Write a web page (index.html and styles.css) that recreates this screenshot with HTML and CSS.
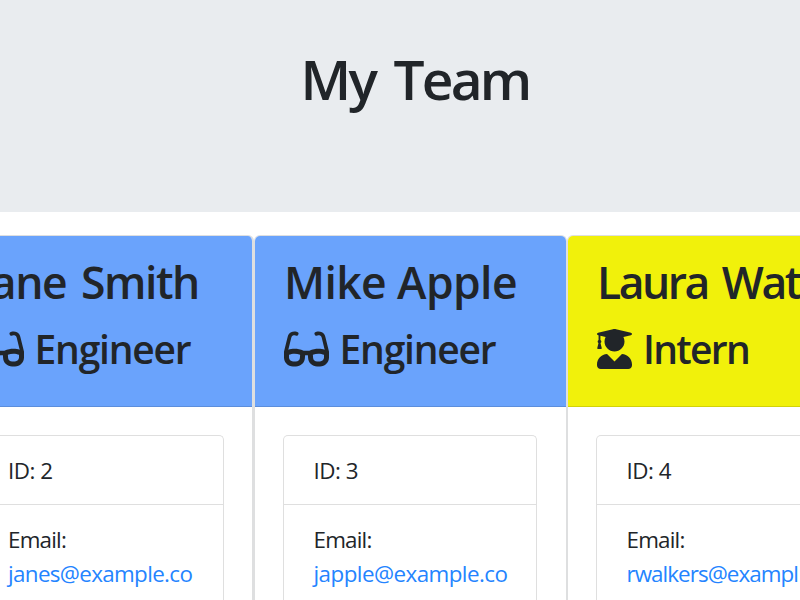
FILE: index.html
```
<!DOCTYPE html>
<html lang="en">
<head>
<meta charset="utf-8">
<title>My Team</title>
<link rel="stylesheet" href="styles.css">
</head>
<body>
<svg class="sprite" width="0" height="0">
  <symbol id="glasses" viewBox="0 0 576 512"><path d="M574.1 280.37L528.75 98.66c-5.91-23.7-21.59-44.05-43-55.81-21.44-11.73-46.97-14.11-70.19-6.33l-15.25 5.08c-8.39 2.79-12.92 11.86-10.12 20.24l5.06 15.18c2.79 8.38 11.85 12.91 20.23 10.12l13.18-4.39c10.87-3.62 23-3.57 33.16 1.73 10.29 5.37 17.57 14.56 20.37 25.82l38.46 153.82c-22.19-6.81-49.79-12.46-81.2-12.46-34.77 0-73.98 7.02-114.85 26.74h-73.18c-40.87-19.74-80.08-26.75-114.86-26.75-31.42 0-59.02 5.65-81.21 12.46l38.46-153.83c2.79-11.25 10.09-20.45 20.38-25.81 10.16-5.3 22.28-5.35 33.15-1.73l13.17 4.39c8.38 2.79 17.44-1.74 20.23-10.12l5.06-15.18c2.8-8.38-1.73-17.45-10.12-20.24l-15.25-5.08c-23.22-7.78-48.75-5.41-70.19 6.33-21.41 11.77-37.09 32.11-43 55.8L1.9 280.37A64.218 64.218 0 0 0 0 295.86v70.25C0 429.01 51.58 480 115.2 480h37.12c60.28 0 110.37-45.94 114.88-105.37l2.93-38.63h35.75l2.93 38.63C313.31 434.06 363.4 480 423.68 480h37.12c63.62 0 115.2-50.99 115.2-113.88v-70.25c0-5.23-.64-10.43-1.9-15.5zm-370.72 89.42c-1.97 25.91-24.4 46.21-51.06 46.21H115.2C86.97 416 64 393.62 64 366.11v-37.54c18.12-6.49 43.42-12.92 72.58-12.92 23.86 0 47.26 4.33 69.93 12.92l-3.13 41.22zM512 366.12c0 27.51-22.97 49.88-51.2 49.88h-37.12c-26.67 0-49.1-20.3-51.06-46.21l-3.13-41.22c22.67-8.59 46.07-12.92 69.95-12.92 29.17 0 54.43 6.43 72.55 12.92v37.55z"/></symbol>
  <symbol id="graduate" viewBox="0 0 448 512"><path d="M319.4 320.6L224 416l-95.4-95.4C57.1 323.7 0 382.2 0 454.4v9.6c0 26.5 21.5 48 48 48h352c26.5 0 48-21.5 48-48v-9.6c0-72.2-57.1-130.7-128.6-133.8zM13.6 79.8l6.4 1.5v58.4c-7 4.2-12 11.5-12 20.3 0 8.4 4.6 15.4 11.1 19.7L3.5 242c-1.7 6.9 2.1 14 7.6 14h41.8c5.5 0 9.3-7.1 7.6-14l-15.6-62.3C51.4 175.4 56 168.4 56 160c0-8.8-5-16.1-12-20.3V87.1l66 15.9c-8.6 17.2-14 36.4-14 57 0 70.7 57.3 128 128 128s128-57.3 128-128c0-20.6-5.3-39.8-14-57l96.3-23.2c18.2-4.4 18.2-27.1 0-31.5l-190.4-46c-13-3.1-26.7-3.1-39.7 0L13.6 48.2c-18.1 4.4-18.1 27.2 0 31.6z"/></symbol>
</svg>
<header class="banner"><h1><span class="title">My Team</span></h1></header>
<main class="team">
  <section class="card engineer first">
    <div class="card-header">
      <h2><span class="name-jane">Jane Smith</span></h2>
      <h3><svg class="icon glasses"><use href="#glasses"/></svg><span class="role">Engineer</span></h3>
    </div>
    <div class="card-body">
      <ul class="details">
        <li><span class="number">ID: 2</span></li>
        <li><span class="label">Email:</span><br><a class="mail-jane">janes@example.co</a></li>
      </ul>
    </div>
  </section>
  <section class="card engineer">
    <div class="card-header">
      <h2><span class="name-mike">Mike Apple</span></h2>
      <h3><svg class="icon glasses"><use href="#glasses"/></svg><span class="role">Engineer</span></h3>
    </div>
    <div class="card-body">
      <ul class="details">
        <li><span class="number">ID: 3</span></li>
        <li><span class="label">Email:</span><br><a>japple@example.co</a></li>
      </ul>
    </div>
  </section>
  <section class="card intern">
    <div class="card-header">
      <h2><span class="name-laura">Laura Wat</span></h2>
      <h3><svg class="icon graduate"><use href="#graduate"/></svg><span class="role">Intern</span></h3>
    </div>
    <div class="card-body">
      <ul class="details">
        <li><span class="number">ID: 4</span></li>
        <li><span class="label">Email:</span><br><a class="mail-laura">rwalkers@exampl</a></li>
      </ul>
    </div>
  </section>
</main>
</body>
</html>
```
FILE: styles.css
```
* { box-sizing: border-box; }
body {
  margin: 0;
  height: 600px;
  overflow: hidden;
  background: #fff;
  color: #212529;
  font: 22.4px/34px "Segoe UI", "Open Sans", "Noto Sans", sans-serif;
}
.sprite { display: block; position: absolute; }
h1, h2, h3 { margin: 0; font-weight: 600; white-space: nowrap; }
.banner {
  height: 211.5px;
  padding: 45px 0 0 30px;
  background: #e9ecef;
  text-align: center;
}
h1 { font-size: 55px; line-height: 67px; }
.title { letter-spacing: -2.8px; word-spacing: 7px; }
.team {
  display: flex;
  width: 931px;
  margin: 23.5px 0 0 -51px;
}
.card {
  flex: 0 0 313px;
  height: 365px;
  border: 1px solid #dedfe0;
  border-bottom: 0;
  border-radius: 6px 6px 0 0;
  overflow: hidden;
}
.card.first { flex-basis: 305px; border-right-width: 2px; }
.card-header {
  height: 171px;
  padding: 19px 0 0 29px;
  border-bottom: 1px solid rgba(0, 0, 0, .125);
}
.engineer .card-header { background: #6aa3fc; }
.intern .card-header { background: #f1f10b; }
h2 { font-size: 44.5px; line-height: 54px; }
.name-jane { letter-spacing: -1.5px; word-spacing: 5px; }
.name-mike { letter-spacing: -.6px; }
.name-laura { letter-spacing: -2.5px; word-spacing: 5px; }
h3 {
  display: flex;
  align-items: center;
  height: 48px;
  margin-top: 15px;
  font-size: 39px;
  line-height: 48px;
}
.role { padding-top: 2px; letter-spacing: -1.2px; }
.intern .role { letter-spacing: -1.7px; }
.icon { flex: none; height: 40px; margin-top: 1px; fill: currentColor; }
.glasses { width: 45px; margin-right: 10.5px; }
.graduate { width: 35px; margin-right: 11px; }
.card-body { padding: 28px 28px 0; }
.details {
  width: 254px;
  height: 165px;
  margin: 0;
  padding: 0;
  list-style: none;
  border: 1px solid #dfdfdf;
  border-bottom: 0;
  border-radius: 5px 5px 0 0;
}
.first .details { width: 246px; }
.details li { padding: 18px 0 16px 29.5px; white-space: nowrap; }
.first .details li { padding-left: 29px; }
.details li + li { padding-bottom: 0; border-top: 1px solid #dfdfdf; }
.number { letter-spacing: -.5px; }
.label { letter-spacing: -.8px; }
.details a { color: #2484ff; letter-spacing: -.55px; }
.details .mail-jane { letter-spacing: -.65px; }
.details .mail-laura { letter-spacing: -.95px; }
```
